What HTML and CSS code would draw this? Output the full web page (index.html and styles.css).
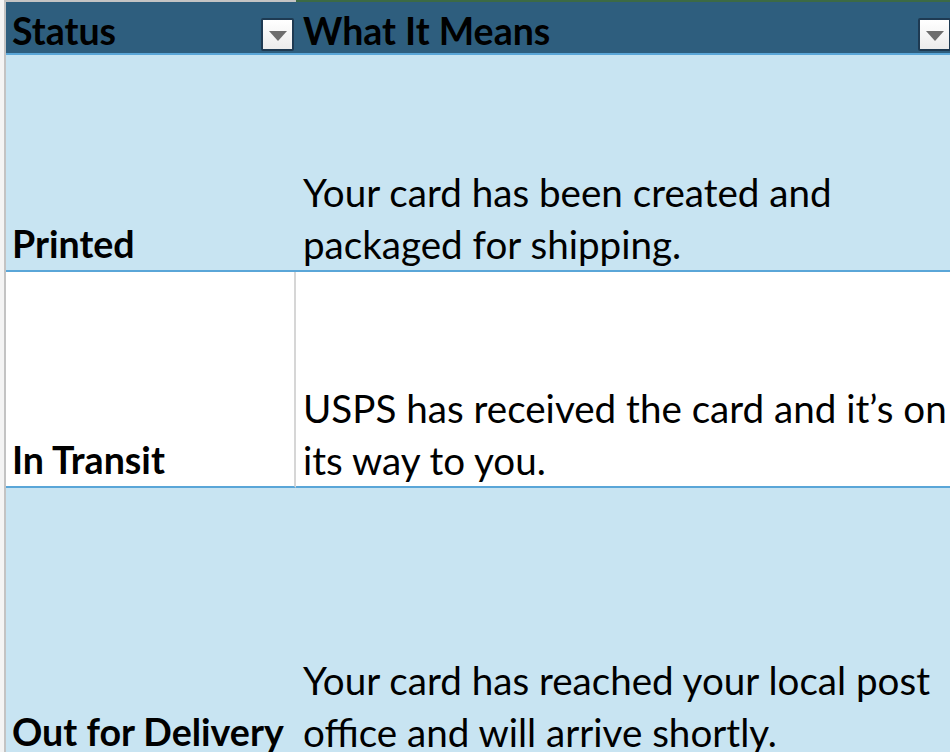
FILE: index.html
```html
<!DOCTYPE html>
<html>
<head>
<meta charset="utf-8">
<link rel="stylesheet" href="styles.css">
</head>
<body>
<div class="sheet">
  <div class="gutter"></div>
  <div class="grid">
    <div class="hcell c1"><span class="htext">Status</span><span class="filter"><span class="tri"></span></span></div>
    <div class="hcell c2"><span class="htext">What It Means</span><span class="filter"><span class="tri"></span></span></div>

    <div class="cell c1 blue r1"><span class="status">Printed</span></div>
    <div class="cell c2 blue r1"><span class="desc">Your card has been created and<br>packaged for shipping.</span></div>

    <div class="cell c1 white r2"><span class="status">In Transit</span></div>
    <div class="cell c2 white r2"><span class="desc">USPS has received the card and it’s on<br>its way to you.</span></div>

    <div class="cell c1 blue r3"><span class="status">Out for Delivery</span></div>
    <div class="cell c2 blue r3"><span class="desc">Your card has reached your local post<br>office and will arrive shortly.</span></div>
  </div>
</div>
</body>
</html>
```
FILE: styles.css
```css
* { box-sizing: border-box; }
html, body { margin: 0; padding: 0; background: #ffffff; overflow: hidden; }
body { font-family: Lato, "Open Sans", sans-serif; color: #000; }
.sheet { display: flex; width: 950px; height: 752px; overflow: hidden; }
.gutter { width: 6px; flex: none; background: #f4f4f4; border-right: 2px solid #c3c3c3; }
.grid {
  display: grid;
  grid-template-columns: 290px 700px;
  grid-template-rows: 55px 217px 216px 270px;
}
.hcell {
  background: #2e5e7e;
  border-bottom: 2px solid #5aa6d8;
  display: flex;
  align-items: flex-end;
  justify-content: space-between;
  position: relative;
}
.hcell.c1 { border-top: 2px solid #c4c4c4; padding-left: 6px; }
.hcell.c2 { border-top: 2px solid #3c6a45; padding-left: 7px; }
.htext { font-weight: 700; font-size: 37.5px; line-height: 44px; }
.filter {
  width: 33px; height: 33px;
  margin: 0 2px 2px 0;
  background: linear-gradient(#ffffff, #ececec);
  border: 2px solid #1e3a52;
  border-radius: 2px;
  display: flex; align-items: center; justify-content: center;
  flex: none;
}
.hcell.c2 .filter { position: absolute; left: 622px; bottom: 2px; margin: 0; }
.tri {
  width: 0; height: 0;
  border-left: 9px solid transparent;
  border-right: 9px solid transparent;
  border-top: 10px solid #6d6d6d;
  margin-top: 2px;
}
.cell {
  display: flex;
  align-items: flex-end;
  border-bottom: 2px solid #5aa6d8;
}
.cell.c1 { padding-left: 6px; }
.cell.c2 { padding-left: 7px; }
.blue { background: #c8e4f2; }
.white { background: #ffffff; }
.white.c1 { border-right: 2px solid #d6d6d6; }
.status { font-weight: 700; font-size: 37.6px; line-height: 52px; }
.desc { font-size: 38.6px; line-height: 52px; }
.r3 { border-bottom: none; }
```
